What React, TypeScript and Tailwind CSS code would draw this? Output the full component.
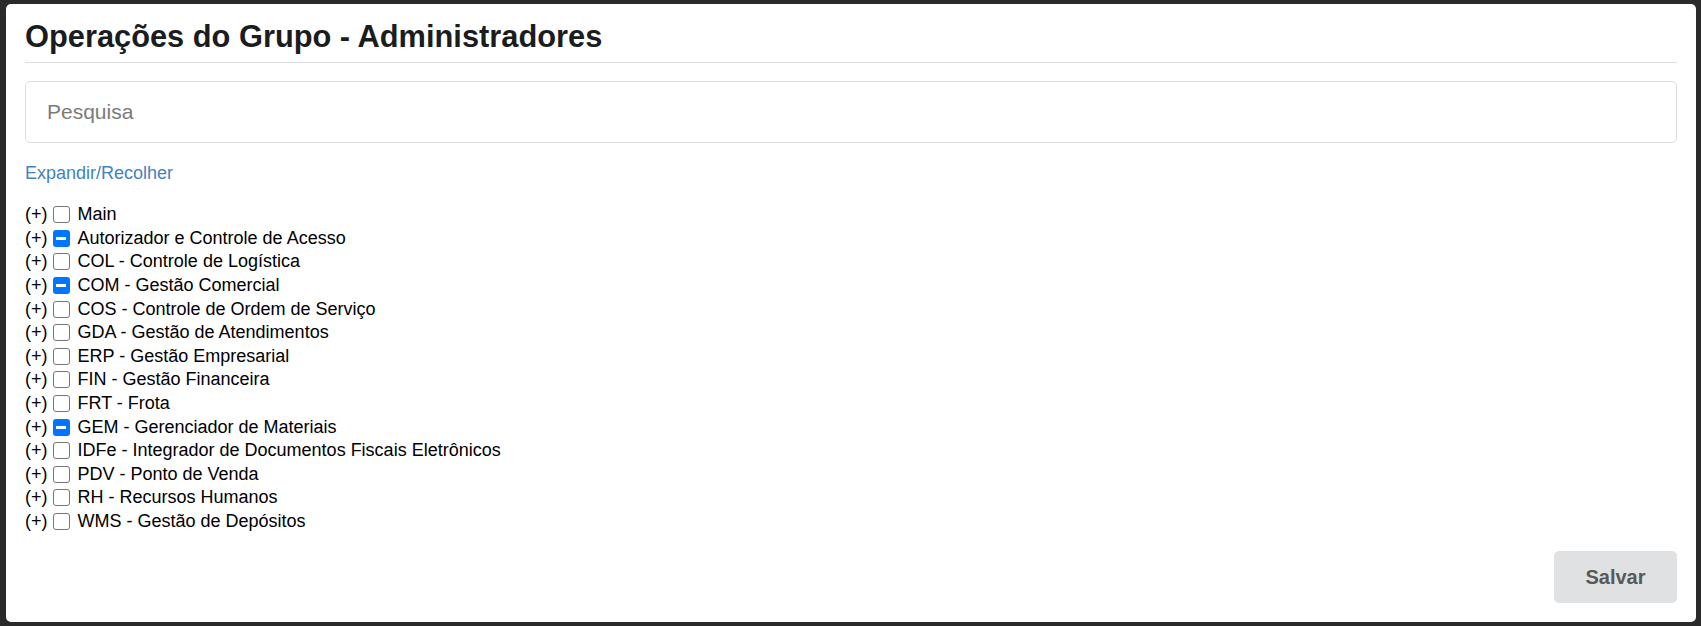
import React from "react";

const items: { label: string; state: "none" | "partial" }[] = [
  { label: "Main", state: "none" },
  { label: "Autorizador e Controle de Acesso", state: "partial" },
  { label: "COL - Controle de Logística", state: "none" },
  { label: "COM - Gestão Comercial", state: "partial" },
  { label: "COS - Controle de Ordem de Serviço", state: "none" },
  { label: "GDA - Gestão de Atendimentos", state: "none" },
  { label: "ERP - Gestão Empresarial", state: "none" },
  { label: "FIN - Gestão Financeira", state: "none" },
  { label: "FRT - Frota", state: "none" },
  { label: "GEM - Gerenciador de Materiais", state: "partial" },
  { label: "IDFe - Integrador de Documentos Fiscais Eletrônicos", state: "none" },
  { label: "PDV - Ponto de Venda", state: "none" },
  { label: "RH - Recursos Humanos", state: "none" },
  { label: "WMS - Gestão de Depósitos", state: "none" },
];

function Box({ state }: { state: "none" | "partial" }) {
  if (state === "partial") {
    return (
      <span className="ml-[5px] mr-[8px] flex h-[17px] w-[17px] shrink-0 items-center justify-center rounded-[3px] bg-[#0075ff]">
        <span className="h-[3px] w-[10px] bg-white" />
      </span>
    );
  }
  return (
    <span className="ml-[5px] mr-[8px] h-[17px] w-[17px] shrink-0 rounded-[3px] border border-[#767676] bg-white" />
  );
}

export default function App() {
  return (
    <div className="min-h-[626px] bg-[#2a2a2a] pt-[4px] pb-[4px] pl-[6px] pr-[5px] font-['Liberation_Sans',Arial,sans-serif]">
      <div className="flex h-[618px] flex-col rounded-[5px] bg-white px-[19px] pt-[14px] pb-[19px]">
        <h2 className="border-b border-[#dedede] pb-[6px] text-[30.8px] font-bold leading-[38px] text-[#1b1c1d]">
          Operações do Grupo - Administradores
        </h2>
        <div className="mt-[18px] flex h-[62px] items-center rounded-[5px] border border-[#dedede] pl-[21px]">
          <input
            className="w-full bg-transparent text-[21px] text-[#1b1c1d] outline-none placeholder:text-[#7b7b7b]"
            placeholder="Pesquisa"
          />
        </div>
        <div className="mt-[20px] text-[18px] leading-[20px]">
          <a className="cursor-pointer text-[#4183c4]">Expandir/Recolher</a>
        </div>
        <ul className="mt-[20px] text-[18px] text-black">
          {items.map((it) => (
            <li key={it.label} className="flex h-[23.6px] items-center whitespace-nowrap">
              <span>(+)</span>
              <Box state={it.state} />
              <span>{it.label}</span>
            </li>
          ))}
        </ul>
        <div className="mt-auto flex justify-end">
          <button className="h-[52px] w-[123px] rounded-[5px] bg-[#e0e1e2] text-[20px] font-bold text-[#595959]">
            Salvar
          </button>
        </div>
      </div>
    </div>
  );
}
